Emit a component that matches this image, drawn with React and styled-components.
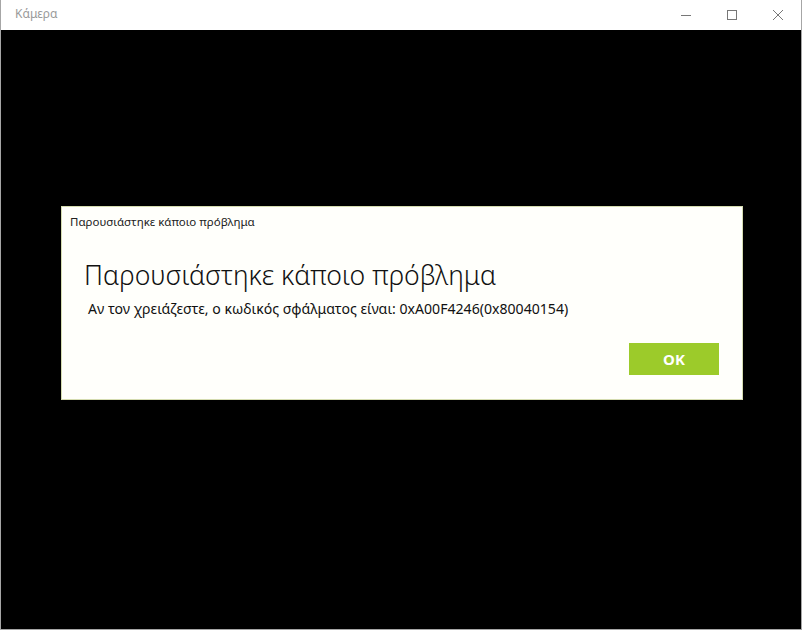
import React from "react";
import styled, { createGlobalStyle } from "styled-components";

const GlobalStyle = createGlobalStyle`
  html, body {
    margin: 0;
    padding: 0;
    background: #ffffff;
  }
  body {
    font-family: "Noto Sans", "Open Sans", "Liberation Sans", sans-serif;
  }
`;

const Window = styled.div`
  width: 802px;
  height: 630px;
  box-sizing: border-box;
  border: 1px solid #a6a6a6;
  border-top: none;
  display: flex;
  flex-direction: column;
`;

const TitleBar = styled.div`
  height: 30px;
  display: flex;
  align-items: center;
  background: #ffffff;
  flex-shrink: 0;
`;

const Title = styled.div`
  flex: 1;
  padding: 0 0 3px 14px;
  font-size: 12px;
  color: #9a9a9a;
`;

const Controls = styled.div`
  display: flex;
  height: 100%;
`;

const ControlBtn = styled.div`
  width: 46px;
  height: 100%;
  display: flex;
  align-items: center;
  justify-content: center;
  color: #777;
`;

const Stage = styled.div`
  flex: 1;
  background: #000000;
  display: flex;
  flex-direction: column;
  align-items: center;
  padding-top: 176px;
`;

const Dialog = styled.div`
  width: 682px;
  height: 194px;
  margin-left: 2px;
  box-sizing: border-box;
  border: 1px solid #d5dcb0;
  background: #fffffb;
  display: flex;
  flex-direction: column;
`;

const DialogCaption = styled.div`
  font-size: 11.5px;
  color: #222;
  padding: 7px 0 0 8px;
  height: 18px;
`;

const Heading = styled.div`
  font-size: 26.6px;
  font-weight: 300;
  color: #111;
  padding: 27px 0 0 22px;
  line-height: 32px;
`;

const Message = styled.div`
  font-size: 14.1px;
  color: #111;
  padding: 8px 0 0 26px;
  line-height: 20px;
`;

const Actions = styled.div`
  display: flex;
  justify-content: flex-end;
  padding: 24px 23px 0 0;
`;

const OkButton = styled.button`
  width: 90px;
  height: 32px;
  border: none;
  background: #9ccb2a;
  color: #ffffff;
  font-family: "Noto Sans", "Open Sans", sans-serif;
  font-weight: 700;
  font-size: 15px;
  cursor: pointer;
`;

export default function App() {
  return (
    <>
      <GlobalStyle />
      <Window>
        <TitleBar>
          <Title>Κάμερα</Title>
          <Controls>
            <ControlBtn>
              <svg width="10" height="10" viewBox="0 0 10 10">
                <line x1="0" y1="5.5" x2="10" y2="5.5" stroke="currentColor" strokeWidth="1" />
              </svg>
            </ControlBtn>
            <ControlBtn>
              <svg width="10" height="10" viewBox="0 0 10 10">
                <rect x="0.5" y="0.5" width="9" height="9" fill="none" stroke="currentColor" strokeWidth="1" />
              </svg>
            </ControlBtn>
            <ControlBtn>
              <svg width="10" height="10" viewBox="0 0 10 10">
                <path d="M0 0 L10 10 M10 0 L0 10" stroke="currentColor" strokeWidth="1" />
              </svg>
            </ControlBtn>
          </Controls>
        </TitleBar>
        <Stage>
          <Dialog>
            <DialogCaption>Παρουσιάστηκε κάποιο πρόβλημα</DialogCaption>
            <Heading>Παρουσιάστηκε κάποιο πρόβλημα</Heading>
            <Message>
              Αν τον χρειάζεστε, ο κωδικός σφάλματος είναι: 0xA00F4246(0x80040154)
            </Message>
            <Actions>
              <OkButton>OK</OkButton>
            </Actions>
          </Dialog>
        </Stage>
      </Window>
    </>
  );
}
